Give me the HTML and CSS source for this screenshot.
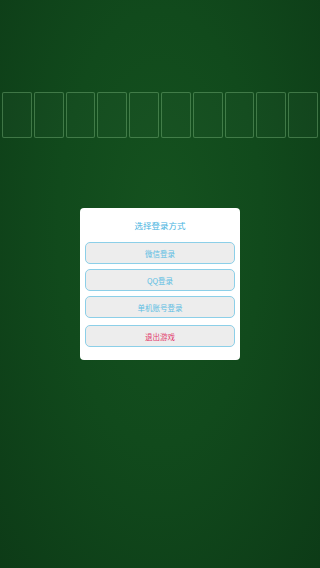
FILE: index.html
```html
<!DOCTYPE html>
<html lang="zh-cn">
<head>
  <meta charset="UTF-8">
  <title>选择登录方式</title>
  <meta name="viewport" content="width=device-width, initial-scale=1">
  <link rel="stylesheet" href="styles.css">
</head>
<body>
  <div class="table">
    <div class="slots">
      <div class="slot"></div>
      <div class="slot"></div>
      <div class="slot"></div>
      <div class="slot"></div>
      <div class="slot"></div>
      <div class="slot"></div>
      <div class="slot"></div>
      <div class="slot"></div>
      <div class="slot"></div>
      <div class="slot"></div>
    </div>
    <div class="dialog">
      <div class="title">选择登录方式</div>
      <button class="btn">微信登录</button>
      <button class="btn">QQ登录</button>
      <button class="btn">单机账号登录</button>
      <button class="btn exit">退出游戏</button>
    </div>
  </div>
</body>
</html>
```

FILE: styles.css
```css
html, body { margin:0; padding:0; }
body { width:320px; height:568px; overflow:hidden; font-family:"Noto Sans CJK SC", "Noto Sans", sans-serif;
  background: radial-gradient(ellipse at 50% 40%, #15521f 0%, #114a1c 45%, #0d3b17 100%); }
.table { display:flex; flex-direction:column; align-items:center; }
.slots { display:flex; gap:2px; padding-top:92px; width:316px; }
.slot { flex:1; height:44px; border:1px solid rgba(150,210,150,0.34); border-radius:2px; background:rgba(255,255,255,0.02); }
.dialog { margin-top:70px; width:160px; background:#fff; border-radius:4px; padding:10px 5px 13px; box-sizing:border-box; display:flex; flex-direction:column; align-items:center; }
.title { font-size:8.5px; line-height:14px; color:#45b3e0; margin-bottom:10px; }
.btn { width:150px; height:22px; margin-bottom:5px; background:#ededed; border:1px solid #8ccfe8; border-radius:5px; font-family:inherit; font-size:7.5px; color:#5bbde3; padding:0; }
.btn.exit { color:#e23a6c; margin-top:2px; margin-bottom:0; }
```
